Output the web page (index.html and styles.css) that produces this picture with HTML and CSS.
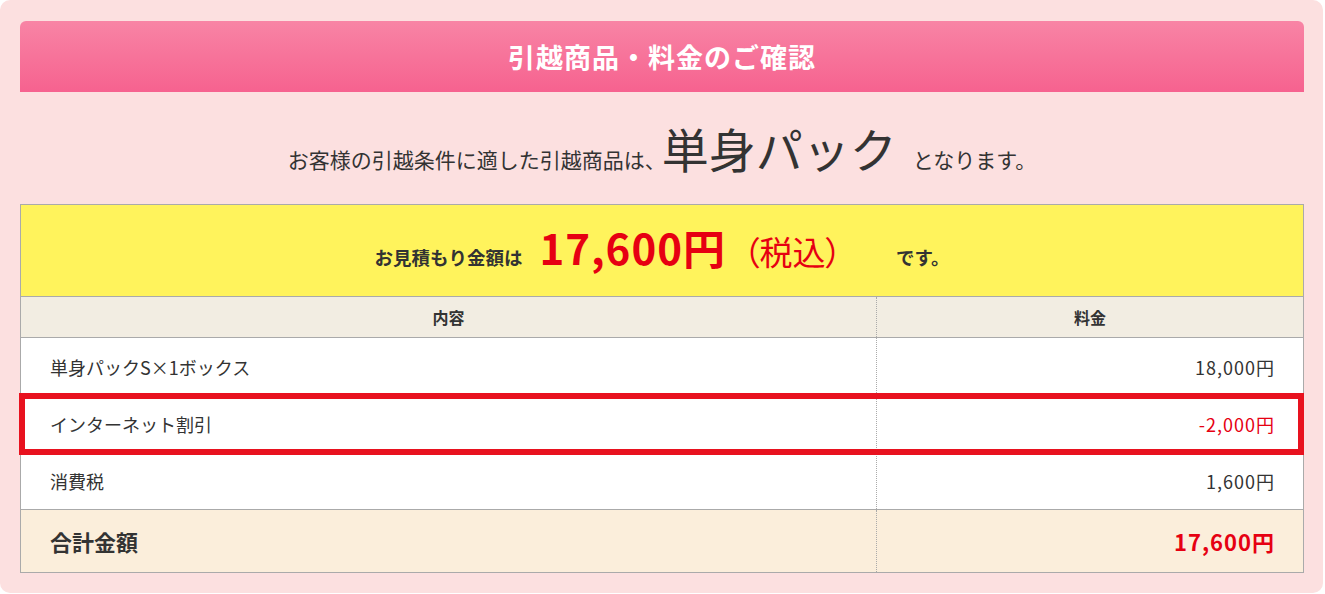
FILE: index.html
```html
<!DOCTYPE html>
<html lang="ja">
<head>
<meta charset="utf-8">
<title>引越商品・料金のご確認</title>
<link rel="stylesheet" href="styles.css">
</head>
<body>
<div class="panel">
  <h2 class="title">引越商品・料金のご確認</h2>
  <p class="lead"><span>お客様の引越条件に適した引越商品は、</span><span class="plan">単身パック</span><span class="tail">となります。</span></p>
  <div class="table">
    <div class="estimate">
      <span class="est-label">お見積もり金額は</span><span class="est-price">17,600円</span><span class="est-tax">（税込）</span><span class="est-end">です。</span>
    </div>
    <div class="row head">
      <div class="cell c1">内容</div>
      <div class="cell c2">料金</div>
    </div>
    <div class="row item">
      <div class="cell c1">単身パックS×1ボックス</div>
      <div class="cell c2">18,000円</div>
    </div>
    <div class="row item highlight">
      <div class="cell c1">インターネット割引</div>
      <div class="cell c2 minus">-2,000円</div>
    </div>
    <div class="row item">
      <div class="cell c1">消費税</div>
      <div class="cell c2">1,600円</div>
    </div>
    <div class="row total">
      <div class="cell c1">合計金額</div>
      <div class="cell c2">17,600円</div>
    </div>
  </div>
</div>
</body>
</html>
```

FILE: styles.css
```css
* { box-sizing: border-box; }
html, body {
  margin: 0;
  padding: 0;
  background: #ffffff;
}
body {
  font-family: "Noto Sans CJK JP", "Noto Sans", sans-serif;
  color: #333333;
}
.panel {
  width: 1323px;
  height: 593px;
  background: #fce0e0;
  border-radius: 10px;
  padding: 21px 19px 0 20px;
}
.title {
  margin: 0;
  height: 71px;
  border-radius: 6px 6px 0 0;
  background: linear-gradient(to bottom, #f884a5, #f6628f);
  color: #ffffff;
  font-size: 27px;
  font-weight: bold;
  letter-spacing: 1px;
  display: flex;
  align-items: center;
  justify-content: center;
  line-height: 1;
}
.lead {
  margin: 0;
  height: 112px;
  display: flex;
  align-items: baseline;
  justify-content: center;
  padding-top: 32px;
  font-size: 21px;
  line-height: 1;
  color: #333333;
}
.lead .plan {
  font-size: 47px;
  margin: 0 16px 0 -4px;
}
.table {
  border: 1px solid #aaaaaa;
  background: #ffffff;
}
.estimate {
  height: 91px;
  background: #fff35c;
  display: flex;
  align-items: baseline;
  justify-content: center;
  padding-top: 21px;
  line-height: 1;
  font-weight: bold;
  font-size: 18.5px;
}
.est-price {
  color: #e60012;
  font-size: 42px;
  letter-spacing: 1px;
  margin-left: 17px;
}
.est-tax {
  color: #e60012;
  font-size: 33px;
  font-weight: normal;
  font-feature-settings: "palt";
  margin-left: 17px;
}
.est-end {
  margin-left: 54px;
}
.row {
  display: grid;
  grid-template-columns: 855px 1fr;
}
.cell {
  display: flex;
  align-items: center;
  line-height: 1;
}
.c2 {
  border-left: 1px dotted #aaaaaa;
}
.head {
  height: 42px;
  background: #f2ede2;
  border-top: 1px solid #aaaaaa;
  border-bottom: 1px solid #aaaaaa;
  font-size: 16px;
  font-weight: bold;
}
.head .cell {
  justify-content: center;
}
.item {
  height: 57px;
  font-size: 18px;
}
.item .c1, .total .c1 {
  padding-left: 29px;
}
.item .c2, .total .c2 {
  justify-content: flex-end;
  padding-right: 28px;
  letter-spacing: 1px;
}
.minus {
  color: #e60012;
}
.highlight {
  position: relative;
}
.highlight::after {
  content: "";
  position: absolute;
  top: -2px;
  left: -2px;
  right: -1px;
  bottom: -3px;
  border: 6px solid #e8121f;
  pointer-events: none;
}
.total {
  height: 63px;
  background: #fbeedb;
  border-top: 1px solid #aaaaaa;
  font-weight: bold;
}
.total .c1 {
  font-size: 22px;
}
.total .c2 {
  font-size: 22px;
  color: #e60012;
}
```
